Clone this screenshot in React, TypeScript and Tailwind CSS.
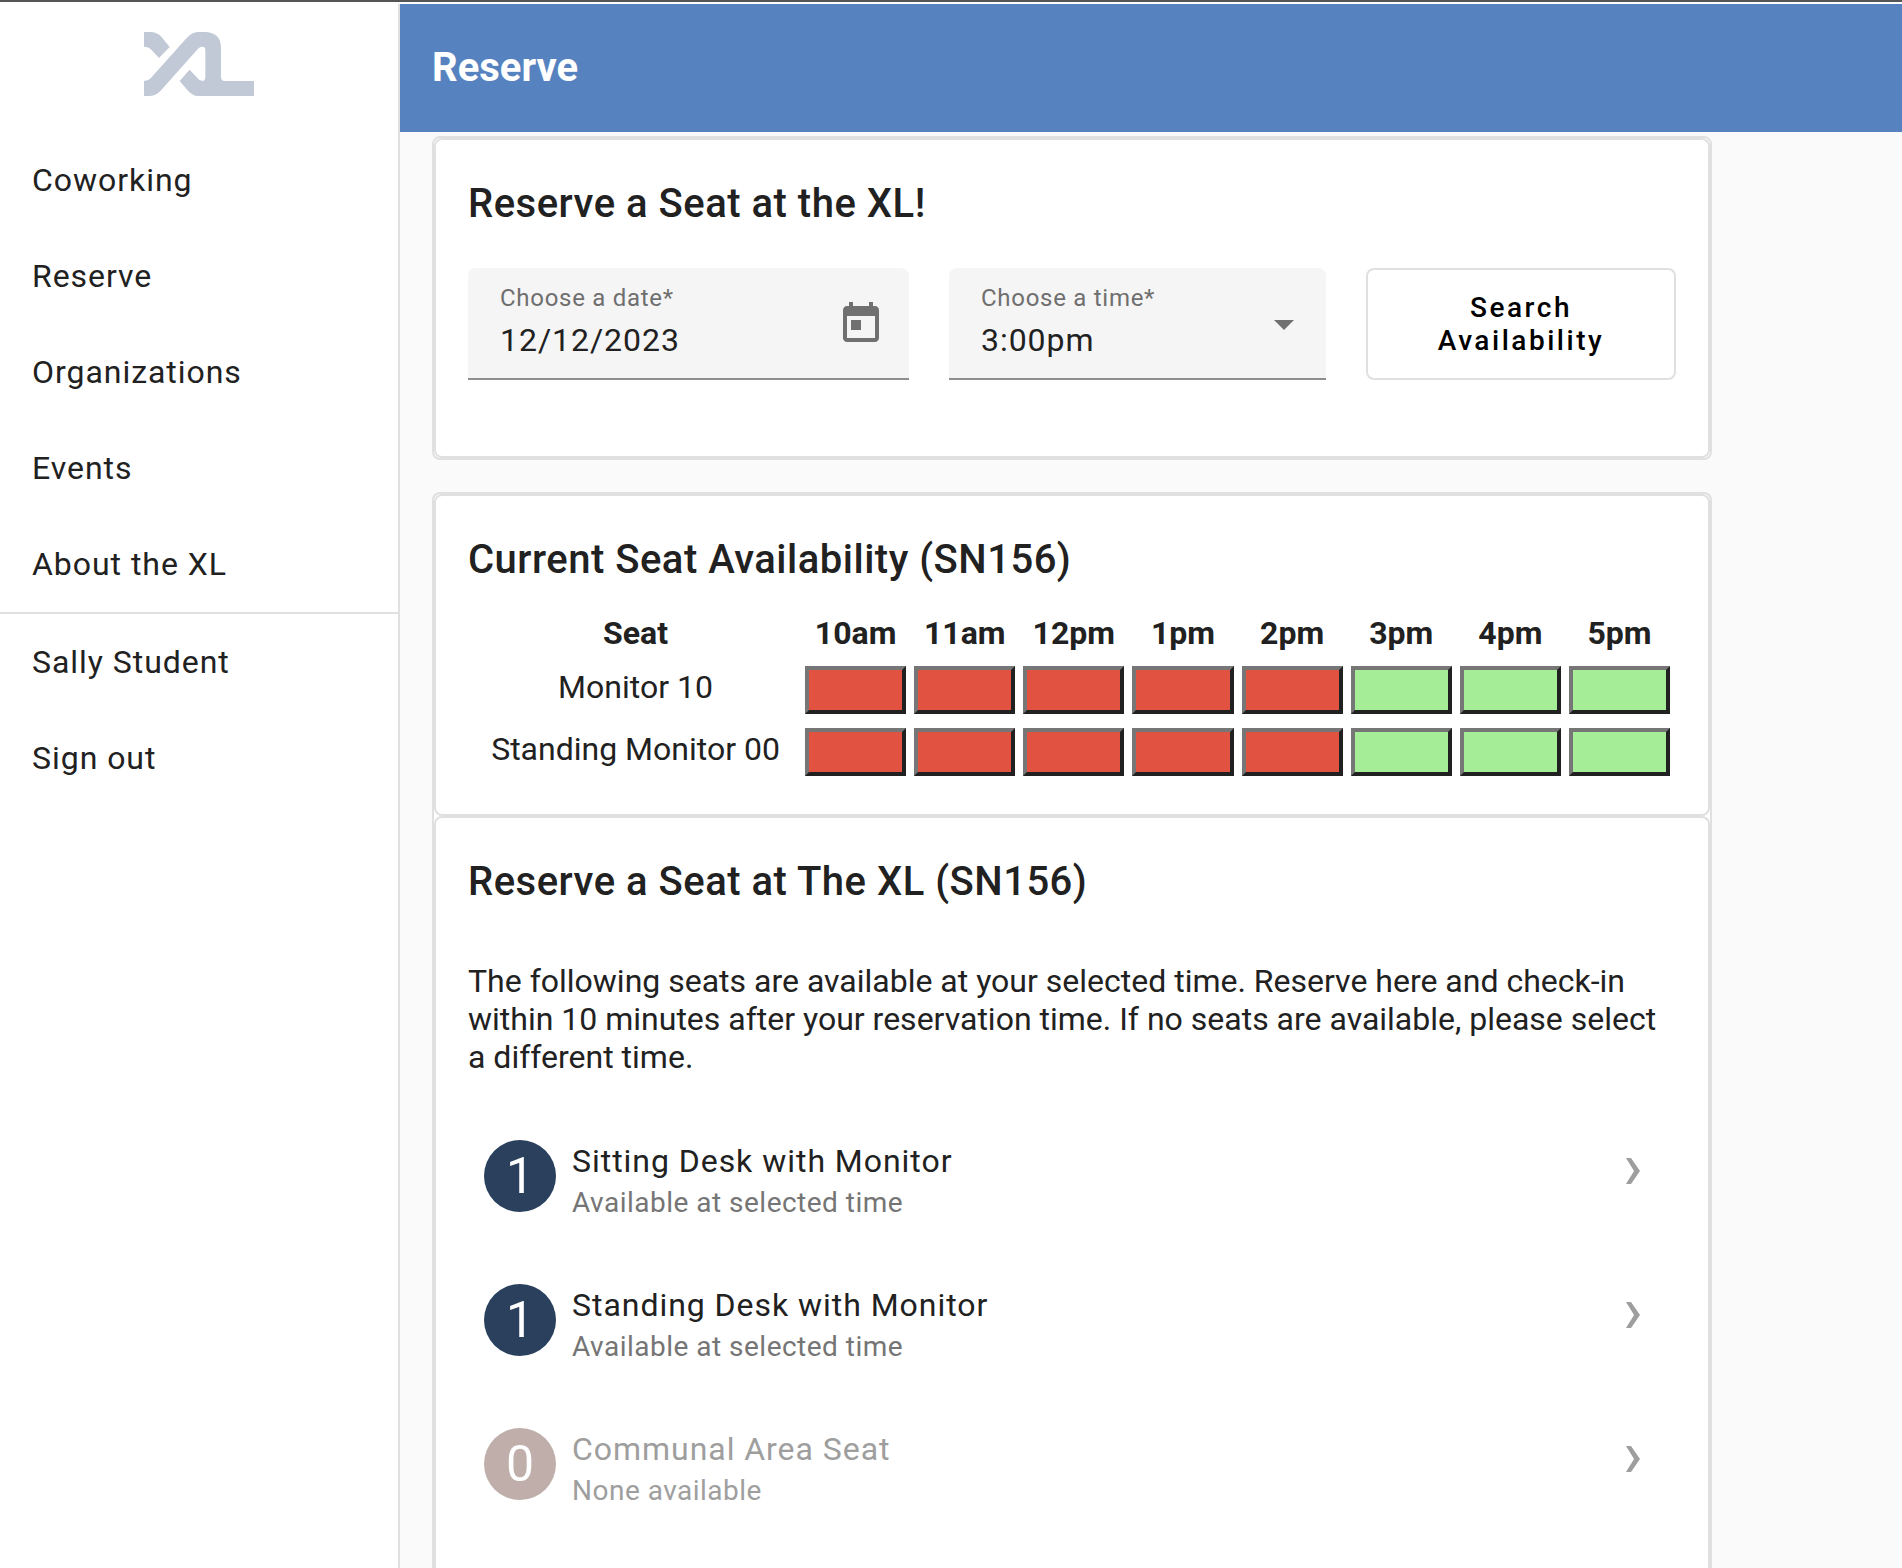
import { useState } from "react";

const mainLinks = ["Coworking", "Reserve", "Organizations", "Events", "About the XL"];
const userLinks = ["Sally Student", "Sign out"];
const hours = ["10am", "11am", "12pm", "1pm", "2pm", "3pm", "4pm", "5pm"];
const times = ["3:00pm", "4:00pm", "5:00pm"];
const seats = [
  { name: "Monitor 10", firstOpen: 5 },
  { name: "Standing Monitor 00", firstOpen: 5 },
];
const categories = [
  { name: "Sitting Desk with Monitor", count: 1 },
  { name: "Standing Desk with Monitor", count: 1 },
  { name: "Communal Area Seat", count: 0 },
];

function Logo() {
  return (
    <svg viewBox="0 0 330 192" className="h-16 w-[110px]" fill="#c1c8d6" role="img" aria-label="XL">
      <path d="M0 0H20Q38 0 52 14L77 45L45 78L22 53Q14 44 0 44Z" />
      <path d="M0 147Q12 147 20 139L128 18Q144 0 162 0H186Q231 3 231 48V134Q231 147 243 147H330V192H162Q146 192 130 174L107 147L137 113L160 138Q166 147 176 147Q184 146 184 134V54Q184 44 175 44Q168 44 162 50L54 172Q38 192 18 192H0Z" />
    </svg>
  );
}

function NavItem({ label }: { label: string }) {
  return (
    <a href="#" className="flex h-24 items-center px-8 text-[32px] leading-[48px] tracking-[0.03em]">
      {label}
    </a>
  );
}

function CardTitle({ children }: { children: React.ReactNode }) {
  return <h2 className="text-[40px] leading-[64px] font-medium tracking-[0.0125em]">{children}</h2>;
}

export default function App() {
  const [date, setDate] = useState("12/12/2023");
  const [time, setTime] = useState("3:00pm");

  return (
    <div className="flex min-h-screen flex-col border-t-2 border-[#555555] bg-[#fafafa] font-[Roboto,sans-serif] text-[#212121]">
      <div className="flex grow border-t-2 border-white">
        <aside className="w-[400px] shrink-0 border-r-2 border-[#e0e0e0] bg-white">
          <div className="flex h-32 items-start justify-center pt-7">
            <Logo />
          </div>
          <nav>
            <div className="border-b-2 border-[#e0e0e0]">
              {mainLinks.map((l) => (
                <NavItem key={l} label={l} />
              ))}
            </div>
            {userLinks.map((l) => (
              <NavItem key={l} label={l} />
            ))}
          </nav>
        </aside>

        <div className="min-w-0 grow">
          <header className="flex h-32 items-center bg-[#5683c0] px-8">
            <h1 className="text-[40px] leading-[64px] font-bold text-white">Reserve</h1>
          </header>

          <main className="flex max-w-[1344px] flex-col gap-8 px-8 pt-1">
            <section className="rounded-lg border-2 border-[#e0e0e0] bg-white">
              <div className="rounded-lg border-2 border-[#e0e0e0] px-8 pt-8 pb-[76px]">
                <CardTitle>Reserve a Seat at the XL!</CardTitle>
                <form
                  className="mt-8 grid grid-cols-[441fr_377fr_310fr] gap-10"
                  onSubmit={(e) => e.preventDefault()}
                >
                  <div className="flex min-w-0 items-center rounded-t-lg border-b-2 border-[#8e8e8e] bg-[#f5f5f5] pt-1.5 pr-6 pl-8">
                    <div className="min-w-0 grow">
                      <label htmlFor="date" className="block text-2xl leading-7 tracking-[0.03em] text-[#6f6f6f]">
                        Choose a date*
                      </label>
                      <input
                        id="date"
                        value={date}
                        onChange={(e) => setDate(e.target.value)}
                        className="block h-14 w-full bg-transparent text-[32px] tracking-[0.03em] outline-none"
                      />
                    </div>
                    <button type="button" aria-label="Open calendar" className="mb-1 shrink-0">
                      <svg viewBox="0 0 24 24" className="size-12" fill="#707070">
                        <path d="M19 3h-1V1h-2v2H8V1H6v2H5c-1.11 0-1.99.9-1.99 2L3 19c0 1.1.89 2 2 2h14c1.1 0 2-.9 2-2V5c0-1.1-.9-2-2-2zm0 16H5V8h14v11zM7 10h5v5H7z" />
                      </svg>
                    </button>
                  </div>
                  <div className="relative min-w-0 rounded-t-lg border-b-2 border-[#8e8e8e] bg-[#f5f5f5] px-8 pt-4">
                    <label htmlFor="time" className="block text-2xl leading-7 tracking-[0.03em] text-[#6f6f6f]">
                      Choose a time*
                    </label>
                    <select
                      id="time"
                      value={time}
                      onChange={(e) => setTime(e.target.value)}
                      className="block h-14 w-full appearance-none bg-transparent text-[32px] tracking-[0.03em] outline-none"
                    >
                      {times.map((t) => (
                        <option key={t}>{t}</option>
                      ))}
                    </select>
                    <svg viewBox="0 0 20 10" className="pointer-events-none absolute top-[52px] right-8 h-[10px] w-5" fill="#707070">
                      <path d="M0 0H20L10 10Z" />
                    </svg>
                  </div>
                  <button
                    type="submit"
                    className="h-28 min-w-0 rounded-lg border-2 border-[#e0e0e0] px-8 text-[28px] leading-[33px] font-medium tracking-[0.09em] text-black"
                  >
                    Search Availability
                  </button>
                </form>
              </div>
            </section>

            <section className="rounded-t-lg border-2 border-b-0 border-[#e0e0e0] bg-white">
              <div className="rounded-lg border-2 border-[#e0e0e0] px-8 pt-8 pb-[26px]">
                <CardTitle>Current Seat Availability (SN156)</CardTitle>
                <table className="mt-[18px] w-full table-fixed border-separate border-spacing-1 text-[32px] leading-[38px]">
                  <thead>
                    <tr>
                      <th className="w-[327px] pb-2 font-bold">Seat</th>
                      {hours.map((h) => (
                        <th key={h} className="pb-2 font-bold">
                          {h}
                        </th>
                      ))}
                    </tr>
                  </thead>
                  <tbody>
                    {seats.map((s) => (
                      <tr key={s.name}>
                        <th scope="row" className="pb-3 font-normal">
                          {s.name}
                        </th>
                        {hours.map((h, i) => (
                          <td key={h} className="px-0.5 pt-0.5 pb-2">
                            <div
                              aria-label={i < s.firstOpen ? "Reserved" : "Available"}
                              className={
                                i < s.firstOpen
                                  ? "h-12 border-4 border-t-[#767676] border-r-[#212121] border-b-[#212121] border-l-[#767676] bg-[#e25241]"
                                  : "h-12 border-4 border-t-[#767676] border-r-[#212121] border-b-[#212121] border-l-[#767676] bg-[#a6ed98]"
                              }
                            />
                          </td>
                        ))}
                      </tr>
                    ))}
                  </tbody>
                </table>
              </div>

              <div className="rounded-t-lg border-2 border-b-0 border-[#e0e0e0] px-8 pt-8 pb-10">
                <CardTitle>Reserve a Seat at The XL (SN156)</CardTitle>
                <p className="mt-12 text-[32px] leading-[38px]">
                  The following seats are available at your selected time. Reserve here and check-in within 10 minutes
                  after your reservation time. If no seats are available, please select a different time.
                </p>
                <ul className="mt-7">
                  {categories.map((c) => (
                    <li key={c.name}>
                      <button type="button" disabled={c.count === 0} className="flex h-36 w-full items-center gap-4 px-4 text-left">
                        <span
                          className={
                            c.count > 0
                              ? "flex size-[72px] shrink-0 items-center justify-center rounded-full bg-[#2a405c] text-[50px] leading-none text-white"
                              : "flex size-[72px] shrink-0 items-center justify-center rounded-full bg-[#bfaeaa] text-[50px] leading-none text-white"
                          }
                        >
                          {c.count}
                        </span>
                        <span className={c.count > 0 ? "grow pt-2.5" : "grow pt-2.5 text-[#9e9e9e]"}>
                          <span className="block text-[32px] leading-[44px] tracking-[0.03em]">{c.name}</span>
                          <span
                            className={
                              c.count > 0
                                ? "block text-[28px] leading-10 tracking-[0.0175em] text-[#757575]"
                                : "block text-[28px] leading-10 tracking-[0.0175em]"
                            }
                          >
                            {c.count > 0 ? "Available at selected time" : "None available"}
                          </span>
                        </span>
                        <svg viewBox="0 0 14 26" className="mr-5 mb-2.5 h-[26px] w-[14px] shrink-0" fill="#9e9e9e">
                          <path d="M0 0H5L14 13L5 26H0L8 13Z" />
                        </svg>
                      </button>
                    </li>
                  ))}
                </ul>
              </div>
            </section>
          </main>
        </div>
      </div>
    </div>
  );
}
